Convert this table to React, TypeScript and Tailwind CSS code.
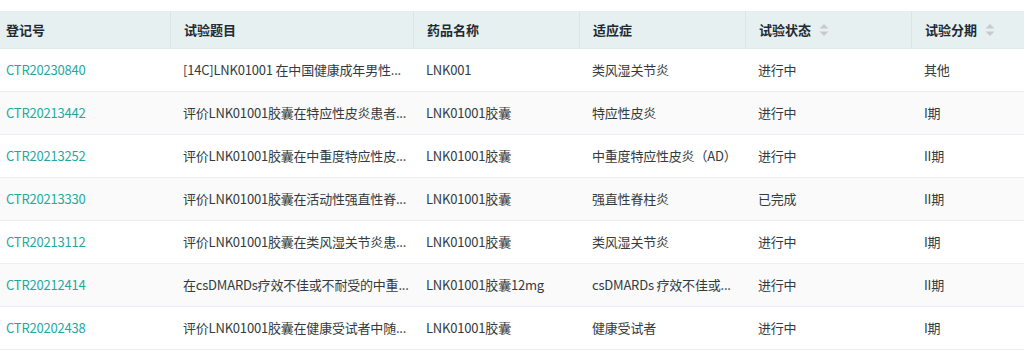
import React from "react";

const rows = [
  ["CTR20230840", "[14C]LNK01001 在中国健康成年男性...", "LNK001", "类风湿关节炎", "进行中", "其他"],
  ["CTR20213442", "评价LNK01001胶囊在特应性皮炎患者...", "LNK01001胶囊", "特应性皮炎", "进行中", "I期"],
  ["CTR20213252", "评价LNK01001胶囊在中重度特应性皮...", "LNK01001胶囊", "中重度特应性皮炎（AD）", "进行中", "II期"],
  ["CTR20213330", "评价LNK01001胶囊在活动性强直性脊...", "LNK01001胶囊", "强直性脊柱炎", "已完成", "II期"],
  ["CTR20213112", "评价LNK01001胶囊在类风湿关节炎患...", "LNK01001胶囊", "类风湿关节炎", "进行中", "I期"],
  ["CTR20212414", "在csDMARDs疗效不佳或不耐受的中重...", "LNK01001胶囊12mg", "csDMARDs 疗效不佳或...", "进行中", "II期"],
  ["CTR20202438", "评价LNK01001胶囊在健康受试者中随...", "LNK01001胶囊", "健康受试者", "进行中", "I期"],
];

const widths = ["w-[170px]", "w-[243px]", "w-[166px]", "w-[166px]", "w-[166px]", "w-[113px]"];
const headers = ["登记号", "试验题目", "药品名称", "适应症", "试验状态", "试验分期"];

function SortIcon() {
  return (
    <svg width="10" height="14" viewBox="0 0 10 14" className="ml-[8px]">
      <path d="M5 1 L9.5 5.5 L0.5 5.5 Z" fill="#c6cbd1" />
      <path d="M5 13 L9.5 8.5 L0.5 8.5 Z" fill="#c6cbd1" />
    </svg>
  );
}

export default function App() {
  return (
    <div
      className="w-[1025px] h-[351px] bg-white pt-[11px]"
      style={{ fontFamily: '"Noto Sans CJK SC", "Noto Sans", sans-serif' }}
    >
      <div className="w-[1024px]">
        <div className="flex h-[38px] bg-[#e7f0f1] border-b border-[#e0eaeb]">
          {headers.map((h, i) => (
            <div
              key={h}
              className={`${widths[i]} flex items-center text-[13px] font-bold text-[#1f2a33] ${i === 0 ? "pl-[6px]" : "pl-[13px] border-l border-[#d8e6e8]"}`}
            >
              {h}
              {i >= 4 && <SortIcon />}
            </div>
          ))}
        </div>
        {rows.map((r, ri) => (
          <div
            key={r[0]}
            className={`flex h-[43px] border-b border-[#ebeef5] ${ri % 2 === 1 ? "bg-[#fafafa]" : "bg-white"}`}
          >
            {r.map((c, ci) => (
              <div
                key={ci}
                className={`${widths[ci]} shrink-0 flex items-center whitespace-nowrap text-[13px] tracking-[-0.2px] ${ci === 0 ? "pl-[6px] text-[#1fa8a0]" : "pl-[13px] text-[#333a40]"}`}
              >
                {c}
              </div>
            ))}
          </div>
        ))}
      </div>
    </div>
  );
}
